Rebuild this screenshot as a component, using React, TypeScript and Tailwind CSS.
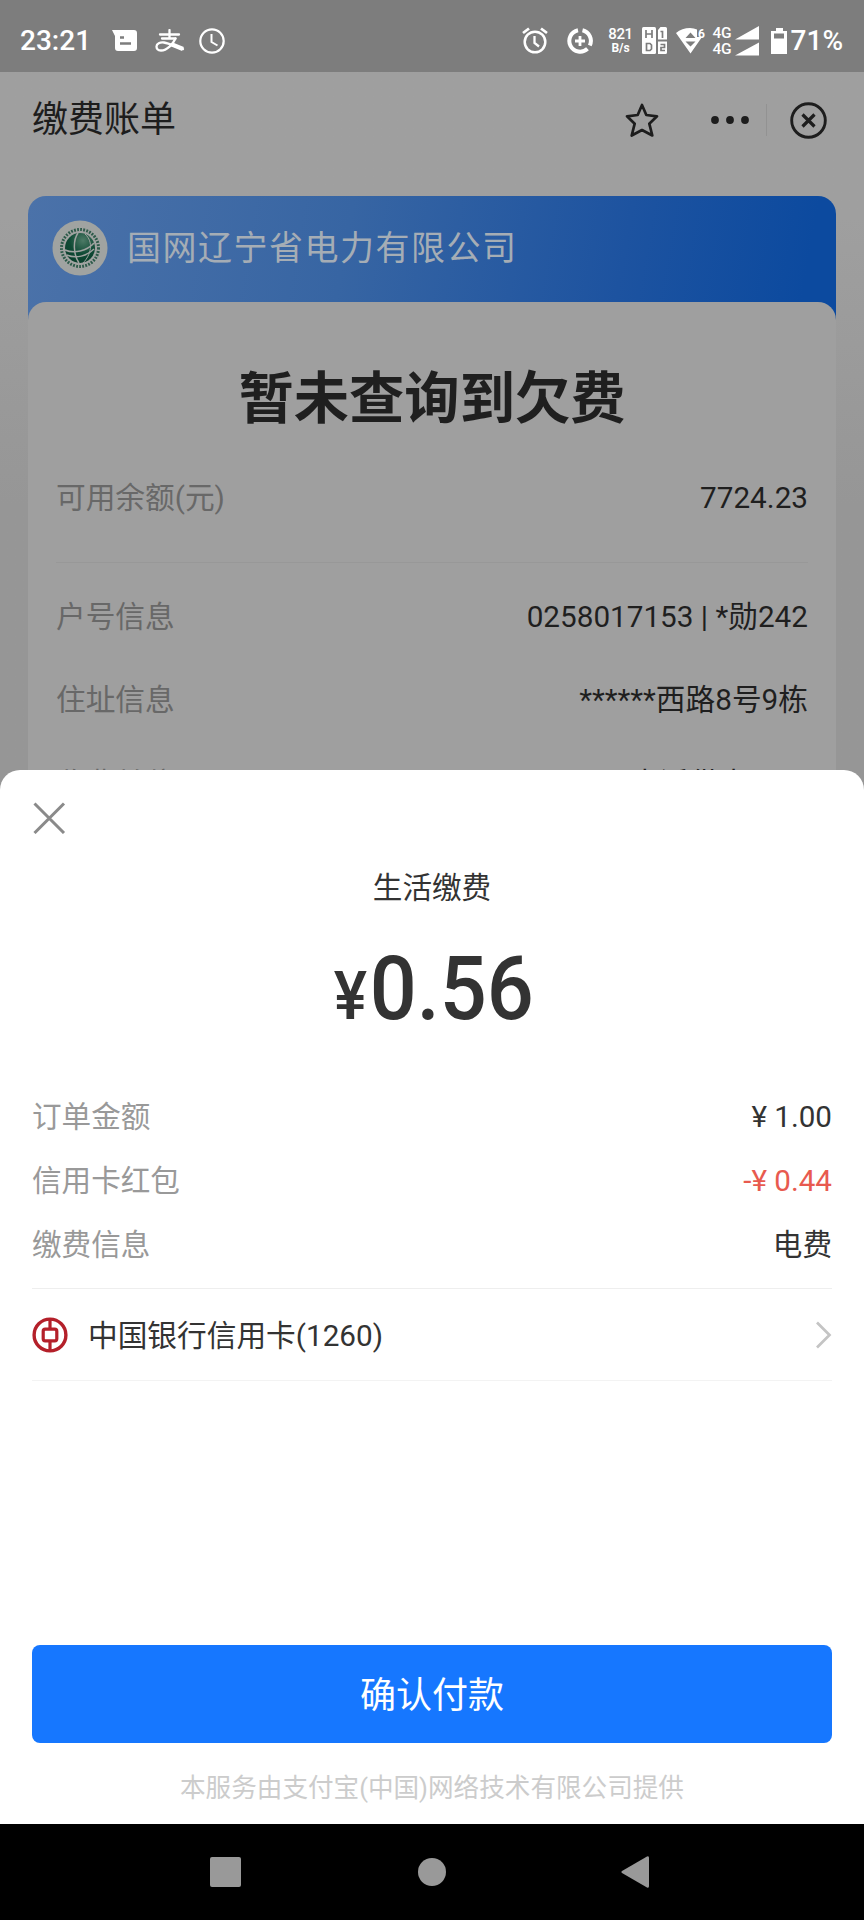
import type { ReactNode } from 'react';

interface InfoRowProps {
  label: string;
  value: ReactNode;
  valueClass?: string;
}

const billRows = [
  { label: '户号信息', value: '0258017153 | *勋242' },
  { label: '住址信息', value: '******西路8号9栋' },
  { label: '收费单位', value: '本溪供电公司' },
];

function StatusBar() {
  return (
    <div className="flex h-[72px] items-center bg-[#7d7d7d] pl-5 pr-[21px] pt-[9px] text-white">
      <span className="w-[92px] text-[28px] font-medium leading-8">23:21</span>
      <svg className="h-[22px] w-[26px]" viewBox="0 0 26 22">
        <path d="M0 0H22Q25 0 25 3V18Q25 21 22 21H6Q3 21 3 18V6Z" fill="#fff" />
        <path d="M8 7.500H12M8 13.500H19" stroke="#7d7d7d" strokeWidth="2.400" />
      </svg>
      <svg className="ml-[17px] h-[24px] w-[30px]" viewBox="0 0 30 24" fill="none" stroke="#fff" strokeLinecap="round">
        <path d="M5 5.500H24M14.500 1V9.500M7 9.500H20.500" strokeWidth="2.300" />
        <path d="M20.500 9.500C18 15 12 21.500 6 21.500C2.500 21.500 1.500 19.500 1.500 17.500C1.500 14.500 5 13 9 13.500C15 14.500 21 18 28 20" strokeWidth="2.300" />
        <path d="M17 15.500L28 20" strokeWidth="4.500" strokeLinecap="butt" />
      </svg>
      <svg className="ml-[14px] h-[26px] w-[26px]" viewBox="0 0 26 26" fill="none" stroke="#fff">
        <circle cx="13" cy="13" r="11.700" strokeWidth="2.200" />
        <path d="M12.500 6V14L18.500 17.500" strokeWidth="2" />
      </svg>

      <div className="ml-auto flex items-center">
        <svg className="h-[27px] w-[26px]" viewBox="0 0 26 27" fill="none" stroke="#fff">
          <circle cx="13" cy="15" r="10.300" strokeWidth="2.500" />
          <path d="M12.500 9V16L17 19.500" strokeWidth="2.300" />
          <path d="M1 6L7 1.500M25 6L19 1.500" strokeWidth="2.800" />
        </svg>
        <svg className="ml-[19px] h-[26px] w-[26px]" viewBox="0 0 26 26" fill="none" stroke="#fff">
          <path d="M11 2.300A10.800 10.800 0 1 0 20.500 20.800" strokeWidth="4" />
          <path d="M15.500 2.300A10.800 10.800 0 0 1 22.800 17.500" strokeWidth="4" />
          <path d="M13 8V18M8 13H18" strokeWidth="2.800" />
        </svg>
        <div className="ml-[15px] flex w-[26px] flex-col items-center">
          <span className="text-[15px] font-medium leading-[15px] tracking-[-0.4px]">821</span>
          <span className="text-[12px] font-bold leading-[13px]">B/s</span>
        </div>
        <svg className="ml-[8px] h-[27px] w-[26px]" viewBox="0 0 26 27">
          <rect x="0" y="0" width="14" height="27" rx="1.500" fill="#fff" />
          <path d="M16 3L18.500 0H23.500Q25 0 25 1.500V12.500H16ZM16 14.500H25V25.500Q25 27 23.500 27H16Z" fill="#fff" />
          <path d="M4 3V11M10 3V11M4 7H10M4.500 16.500H8L9.500 18V22L8 23.500H4.500ZM18.500 4.500H20.500V11M18.500 17.500H22.500V20.500H19V23.500H23" fill="none" stroke="#7d7d7d" strokeWidth="1.700" />
        </svg>
        <svg className="ml-[8px] h-[26px] w-[30px]" viewBox="0 0 30 26">
          <path d="M0 5Q6 0 14 0Q18 0 21 1.500V9H26L14.500 25.500Z" fill="#fff" />
          <path d="M9.500 10L14.500 4.500L19.500 10ZM9.500 13.500H19.500L14.500 18.500Z" fill="#7d7d7d" />
          <text x="22" y="9.500" fontSize="12" fontWeight="700" fill="#fff">6</text>
        </svg>
        <div className="ml-[7px] flex w-[20px] flex-col text-[15.5px] font-medium leading-[16px] tracking-[-0.3px]">
          <span>4G</span>
          <span>4G</span>
        </div>
        <svg className="ml-[2px] h-[30px] w-[24px]" viewBox="0 0 24 30">
          <path d="M24 0V13.500H0ZM24 16.500V29.500H0Z" fill="#fff" />
        </svg>
        <svg className="ml-[12px] h-[26px] w-[17px]" viewBox="0 0 17 26">
          <path d="M5 0H12V3H16V26H0V3H5Z" fill="#fff" />
          <rect x="3" y="5.500" width="10" height="5" fill="#7d7d7d" />
        </svg>
        <span className="ml-[3px] text-[28px] font-medium leading-8">71%</span>
      </div>
    </div>
  );
}

function Header() {
  return (
    <div className="flex h-[124px] items-start pl-8 pr-[37px] pt-[26px] text-[#1d1d1d]">
      <h1 className="pt-[2px] text-[36px] leading-10">缴费账单</h1>
      <div className="ml-auto flex h-[44px] items-center">
        <svg className="h-[36px] w-[34px]" viewBox="0 0 34 36" fill="none" stroke="#1d1d1d" strokeWidth="2.700" strokeLinejoin="round">
          <path d="M17 3L21.300 13L32 14.300L24.300 21.700L27.300 33.500L17 28L6.700 33.500L9.700 21.700L2 14.300L12.700 13Z" />
        </svg>
        <svg className="ml-[52px] h-[8px] w-[40px]" viewBox="0 0 40 8" fill="#1d1d1d">
          <circle cx="4" cy="4" r="3.900" />
          <circle cx="19" cy="4" r="3.900" />
          <circle cx="34" cy="4" r="3.900" />
        </svg>
        <div className="ml-[15px] h-8 w-px bg-[#929292]" />
        <svg className="ml-[23px] h-[37px] w-[37px]" viewBox="0 0 37 37" fill="none" stroke="#1d1d1d">
          <circle cx="18.500" cy="18.500" r="16.800" strokeWidth="2.900" />
          <path d="M12.500 12.500L24.500 24.500M24.500 12.500L12.500 24.500" strokeWidth="3.200" />
        </svg>
      </div>
    </div>
  );
}

function GridLogo() {
  return (
    <svg className="h-[56px] w-[56px]" viewBox="0 0 56 56">
      <defs>
        <radialGradient id="globe" cx="0.6" cy="0.25" r="0.75">
          <stop offset="0" stopColor="#4d7a66" />
          <stop offset="0.6" stopColor="#0f4a35" />
          <stop offset="1" stopColor="#0a3f2c" />
        </radialGradient>
      </defs>
      <circle cx="28" cy="28" r="27.500" fill="#a0a3a1" />
      <circle cx="28" cy="28" r="18.500" fill="none" stroke="#2c5a49" strokeWidth="3" strokeDasharray="1.800 1.300" />
      <circle cx="28" cy="28" r="15" fill="url(#globe)" />
      <g fill="none" stroke="#a0a3a1" strokeWidth="1.500">
        <path d="M26 13C21 20 21 34 27 43" />
        <path d="M13 30C22 34 35 31 42 23" />
        <path d="M15 35C24 39 35 36 42 29" />
        <path d="M33 14C42 22 39 35 31 43" strokeWidth="1" />
      </g>
    </svg>
  );
}

function BillRow({ label, value }: InfoRowProps) {
  return (
    <div className="flex h-[83.5px] items-center justify-between text-[29.7px]">
      <span className="text-[#686868]">{label}</span>
      <span className="text-[#1f1f1f]">{value}</span>
    </div>
  );
}

function BillCard() {
  return (
    <div className="mx-7 rounded-t-[18px] bg-linear-[100deg,#4b72a9_0%,#3765a3_35%,#1d53a0_65%,#0c4a9f_85%]">
      <div className="flex h-[106px] items-center pb-[2px] pl-[24px]">
        <GridLogo />
        <span className="ml-[19px] text-[34px] tracking-[1.5px] text-[#a5adb5]">国网辽宁省电力有限公司</span>
      </div>
      <div className="h-[600px] rounded-t-[18px] bg-[#9f9f9f] px-7 pt-[58px]">
        <h2 className="text-center text-[55.3px] font-bold leading-[80px] text-[#1f1f1f]">暂未查询到欠费</h2>
        <div className="mb-[13px] mt-[17px] border-b border-[#989898] pb-[21px]">
          <BillRow label="可用余额(元)" value="7724.23" />
        </div>
        {billRows.map(row => (
          <BillRow key={row.label} label={row.label} value={row.value} />
        ))}
      </div>
    </div>
  );
}

function OrderRow({ label, value, valueClass = 'text-[#333]' }: InfoRowProps) {
  return (
    <div className="flex h-16 items-center justify-between text-[29.6px]">
      <span className="text-[#999]">{label}</span>
      <span className={valueClass}>{value}</span>
    </div>
  );
}

function PaySheet() {
  return (
    <div className="relative flex h-[1054px] flex-col rounded-t-[20px] bg-white px-8">
      <svg className="mt-[32px] h-[32px] w-[34px] shrink-0" viewBox="0 0 34 32" fill="none" stroke="#8a8a8a" strokeWidth="3">
        <path d="M2.500 1.500L32 31M32 1.500L2.500 31" />
      </svg>
      <div className="mt-[34px] text-center text-[29.6px] leading-10 text-[#333]">生活缴费</div>
      <div className="mt-[26px] flex h-[107px] items-baseline justify-center pl-[15px] text-[#333]">
        <span className="origin-right scale-x-95 text-[66px] font-medium leading-[110px]">¥</span>
        <span className="origin-left scale-x-[.93] pl-[3px] text-[89px] font-medium leading-[110px]">0.56</span>
      </div>
      <div className="mt-[44px] border-b border-[#eee] pb-[11px]">
        <OrderRow label="订单金额" value="¥ 1.00" />
        <OrderRow label="信用卡红包" value="-¥ 0.44" valueClass="text-[#e85a4f]" />
        <OrderRow label="缴费信息" value="电费" />
      </div>
      <div className="flex h-[92px] items-center border-b border-[#f3f3f3] text-[29.7px] text-[#333]">
        <svg className="h-[36px] w-[36px]" viewBox="0 0 36 36" fill="none" stroke="#b4202a">
          <circle cx="18" cy="18" r="15.900" strokeWidth="3.400" />
          <rect x="11.200" y="12.200" width="13.600" height="11.600" rx="2" strokeWidth="3.200" />
          <path d="M18 2V12M18 24V34" strokeWidth="3.200" />
        </svg>
        <span className="ml-5 pt-[3px]">中国银行信用卡(1260)</span>
        <svg className="ml-auto h-[28px] w-[17px]" viewBox="0 0 17 28" fill="none" stroke="#c4c4c4" strokeWidth="2.700">
          <path d="M2 1.500L14.500 14L2 26.500" />
        </svg>
      </div>
      <button className="mt-[264px] h-[98px] shrink-0 rounded-lg bg-[#1677ff] pt-[3px] text-[36px] text-white">确认付款</button>
      <div className="mt-[25px] text-center text-[25.6px] leading-10 text-[#ccc]">本服务由支付宝(中国)网络技术有限公司提供</div>
    </div>
  );
}

function NavBar() {
  return (
    <div className="h-24 bg-black">
      <svg className="h-24 w-[864px]" viewBox="0 0 864 96" fill="#999">
        <rect x="210" y="33" width="31" height="30" rx="2" />
        <circle cx="432" cy="48" r="14" />
        <path d="M622 47L647 32.500Q649 31.500 649 34V62Q649 64.500 647 63.500L622 49Q620.500 48 622 47Z" />
      </svg>
    </div>
  );
}

export default function App() {
  return (
    <div className="h-[1920px] w-[864px] overflow-hidden bg-black font-['Roboto','Noto_Sans_CJK_SC',sans-serif]">
      <div className="h-[770px] bg-[#979797]">
        <StatusBar />
        {/* page behind the sheet, kept a bit taller so it shows through the rounded corners */}
        <div className="h-[720px] overflow-hidden bg-linear-to-b from-[#9f9f9f] from-20% to-[#969696] to-60%">
          <Header />
          <BillCard />
        </div>
      </div>
      <PaySheet />
      <NavBar />
    </div>
  );
}
